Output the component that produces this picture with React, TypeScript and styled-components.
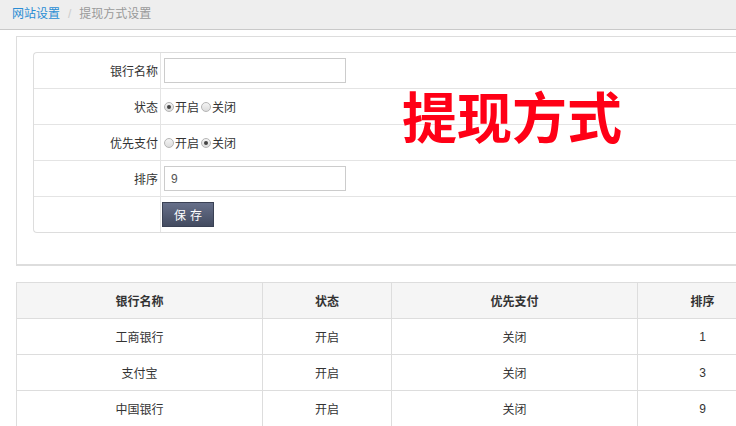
import styled, { createGlobalStyle } from 'styled-components';

const GlobalStyle = createGlobalStyle`
  html, body {
    margin: 0;
    padding: 0;
    background: #fff;
    overflow: hidden;
  }
  body {
    font-family: "Liberation Sans", "Noto Sans CJK SC", sans-serif;
    font-size: 12px;
    color: #333;
  }
`;

const Breadcrumb = styled.div`
  height: 29px;
  line-height: 29px;
  background: #eeeeee;
  border-bottom: 1px solid #c9c9c9;
  padding-left: 12px;
  font-size: 12px;
  color: #999;
`;

const Crumb = styled.span<{ $active?: boolean }>`
  color: ${(p) => (p.$active ? '#2a8dd4' : '#999')};
`;

const Sep = styled.span`
  color: #ccc;
  margin: 0 8px;
`;

const Content = styled.div`
  padding: 6px 0 0 16px;
`;

const Panel = styled.div`
  position: relative;
  width: 760px;
  border: 1px solid #ddd;
  border-right: none;
  border-bottom: 2px solid #ddd;
  padding: 15px 0 31px 16px;
  box-sizing: border-box;
`;

const FormTable = styled.div`
  border: 1px solid #ddd;
  border-right: none;
  border-radius: 4px 0 0 4px;
`;

const FormRow = styled.div<{ $last?: boolean }>`
  display: grid;
  grid-template-columns: 127px 1fr;
  height: 35px;
  border-bottom: ${(p) => (p.$last ? 'none' : '1px solid #e4e4e4')};
`;

const LabelCell = styled.div`
  display: flex;
  align-items: center;
  justify-content: flex-end;
  padding-right: 2px;
  border-right: 1px solid #e4e4e4;
  color: #333;
`;

const ValueCell = styled.div`
  display: flex;
  align-items: center;
  padding-left: 3px;
`;

const TextInput = styled.input`
  width: 182px;
  height: 25px;
  box-sizing: border-box;
  border: 1px solid #ccc;
  padding: 0 6px;
  font-family: inherit;
  font-size: 12px;
  color: #555;
  outline: none;
`;

const RadioLabel = styled.label`
  display: inline-flex;
  align-items: center;
  margin-right: 2px;
  color: #333;
`;

const Radio = styled.input`
  appearance: none;
  width: 10px;
  height: 10px;
  margin: 0 1px 0 0;
  border: 1px solid #b5b5b5;
  border-radius: 50%;
  background: linear-gradient(#f4f4f4, #dcdcdc);
  position: relative;
  &:checked::after {
    content: '';
    position: absolute;
    left: 2px;
    top: 2px;
    width: 4px;
    height: 4px;
    border-radius: 50%;
    background: #444;
  }
`;

const SaveButton = styled.button`
  margin-left: -2px;
  width: 52px;
  height: 25px;
  border: 1px solid #3a4154;
  background: linear-gradient(#67708a, #434b60);
  color: #fff;
  font-family: inherit;
  font-size: 12px;
  letter-spacing: 4px;
  padding: 0 0 0 4px;
  cursor: pointer;
`;

const Stamp = styled.div`
  position: absolute;
  left: 385px;
  top: 44px;
  font-family: "Noto Sans CJK SC", sans-serif;
  font-weight: 700;
  font-size: 55px;
  line-height: 1.2;
  color: #ff0016;
`;

const DataTable = styled.table`
  margin-top: 16px;
  width: 751px;
  border-collapse: collapse;
  table-layout: fixed;
  font-size: 12px;
`;

const Th = styled.th`
  height: 35px;
  padding: 0;
  background: #f5f5f5;
  border: 1px solid #ddd;
  font-weight: 700;
  color: #333;
  text-align: center;
`;

const Td = styled.td`
  height: 35px;
  padding: 0;
  border: 1px solid #ddd;
  color: #333;
  text-align: center;
`;

const rows = [
  { name: '工商银行', status: '开启', priority: '关闭', sort: 1 },
  { name: '支付宝', status: '开启', priority: '关闭', sort: 3 },
  { name: '中国银行', status: '开启', priority: '关闭', sort: 9 },
];

export default function App() {
  return (
    <>
      <GlobalStyle />
      <Breadcrumb>
        <Crumb $active>网站设置</Crumb>
        <Sep>/</Sep>
        <Crumb>提现方式设置</Crumb>
      </Breadcrumb>
      <Content>
        <Panel>
          <FormTable>
            <FormRow>
              <LabelCell>银行名称</LabelCell>
              <ValueCell>
                <TextInput defaultValue="" />
              </ValueCell>
            </FormRow>
            <FormRow>
              <LabelCell>状态</LabelCell>
              <ValueCell>
                <RadioLabel>
                  <Radio type="radio" name="status" defaultChecked />开启
                </RadioLabel>
                <RadioLabel>
                  <Radio type="radio" name="status" />关闭
                </RadioLabel>
              </ValueCell>
            </FormRow>
            <FormRow>
              <LabelCell>优先支付</LabelCell>
              <ValueCell>
                <RadioLabel>
                  <Radio type="radio" name="priority" />开启
                </RadioLabel>
                <RadioLabel>
                  <Radio type="radio" name="priority" defaultChecked />关闭
                </RadioLabel>
              </ValueCell>
            </FormRow>
            <FormRow>
              <LabelCell>排序</LabelCell>
              <ValueCell>
                <TextInput defaultValue="9" />
              </ValueCell>
            </FormRow>
            <FormRow $last>
              <LabelCell />
              <ValueCell>
                <SaveButton type="button">保存</SaveButton>
              </ValueCell>
            </FormRow>
          </FormTable>
          <Stamp>提现方式</Stamp>
        </Panel>
        <DataTable>
          <colgroup>
            <col style={{ width: 246 }} />
            <col style={{ width: 129 }} />
            <col style={{ width: 246 }} />
            <col style={{ width: 130 }} />
          </colgroup>
          <thead>
            <tr>
              <Th>银行名称</Th>
              <Th>状态</Th>
              <Th>优先支付</Th>
              <Th>排序</Th>
            </tr>
          </thead>
          <tbody>
            {rows.map((r) => (
              <tr key={r.name}>
                <Td>{r.name}</Td>
                <Td>{r.status}</Td>
                <Td>{r.priority}</Td>
                <Td>{r.sort}</Td>
              </tr>
            ))}
          </tbody>
        </DataTable>
      </Content>
    </>
  );
}
